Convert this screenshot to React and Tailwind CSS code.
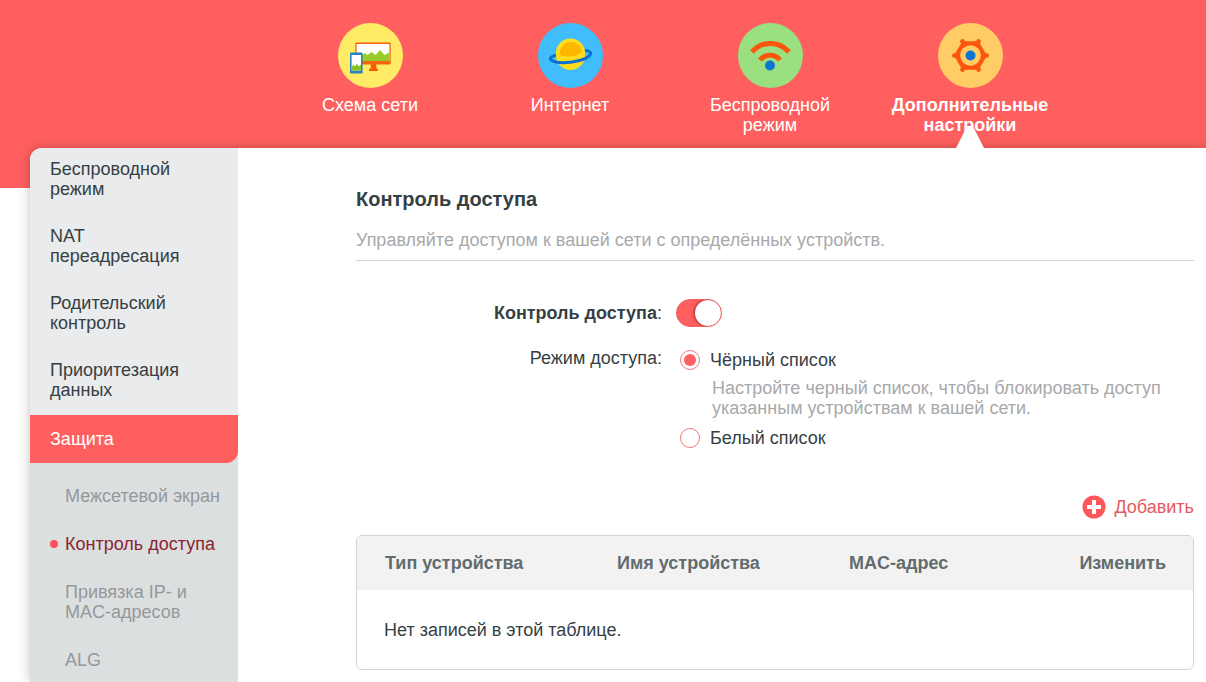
import React, { useState } from 'react';
import clsx from 'clsx';

const NetworkMapIcon = () => (
  <svg viewBox="0 0 65 65" className="h-[65px] w-[65px]" aria-hidden="true">
    <circle cx="32.5" cy="32.5" r="32.5" fill="#ffeb66" />
    <path d="M33 41h5l.6 5H40v2H31v-2h1.4z" fill="#f9590a" />
    <rect x="17.3" y="19.6" width="35.4" height="22" rx="1" fill="#f4640f" />
    <rect x="18.6" y="21" width="32.8" height="17" fill="#fff" />
    <path d="M18.6 38v-4l5-1.6 3-2.4 3 2 4-3 4 3 4.5-5 4.5 5 4.8-2.4V38z" fill="#96cb2a" />
    <rect x="12" y="29.6" width="12.6" height="21" rx="1" fill="#2a84bb" />
    <rect x="13.6" y="32" width="9.4" height="15.5" fill="#fff" />
    <path d="M13.6 47.5V44l1.8-2.5 1.6 2 2-3 1.8 3 2.2-2v6z" fill="#84c225" />
  </svg>
);

const InternetIcon = () => (
  <svg viewBox="0 0 65 65" className="h-[65px] w-[65px]" aria-hidden="true">
    <circle cx="32.5" cy="32.5" r="32.5" fill="#41bdfc" />
    <circle cx="32.5" cy="32.5" r="14.5" fill="#ffdd1c" />
    <path
      d="M18 32c-5 1.5-7 3.5-4.5 5.3C19 40.8 32 40.2 42.5 37.300 50.5 35 54 31 52 29c-1-1-3-1.500-5-1.500"
      fill="none"
      stroke="#0d6fd0"
      strokeWidth="3"
    />
    <path d="M18 31a14.5 14.5 0 0 1 29-2c1 3-1 5-5 6-7 2-16 3-23 2z" fill="#ffdd1c" />
    <path d="M22 32a11 11 0 1 1 22-3.500c-3 5-15 6.500-22 3.500z" fill="#ffb600" />
  </svg>
);

const WirelessIcon = () => (
  <svg viewBox="0 0 65 65" className="h-[65px] w-[65px]" aria-hidden="true">
    <circle cx="32.5" cy="32.5" r="32.5" fill="#9adf80" />
    <g fill="none" stroke="#fb560b" strokeWidth="5">
      <path d="M14 29c10-11.5 27-11.5 37 0" />
      <path d="M22 37c5-6.5 15-6.5 20 0" />
    </g>
    <circle cx="32" cy="42.5" r="5" fill="#0b76d2" />
  </svg>
);

const AdvancedIcon = () => (
  <svg viewBox="0 0 65 65" className="h-[65px] w-[65px]" aria-hidden="true">
    <circle cx="32.5" cy="32.5" r="32.5" fill="#ffcc66" />
    <g fill="#fb560b">
      {[0, 60, 120, 180, 240, 300].map((angle) => (
        <circle key={angle} cx="48.7" cy="32.5" r="2.3" transform={`rotate(${angle} 32.5 32.5)`} />
      ))}
      <path d="M49 32.5 40.700 46.800H24.300L16 32.5l8.300-14.300h16.400z" />
    </g>
    <circle cx="32.5" cy="32.5" r="10.3" fill="#ffcc66" />
    <circle cx="32.5" cy="32.5" r="5" fill="#0b76d2" />
  </svg>
);

const tabs = [
  { label: 'Схема сети', Icon: NetworkMapIcon },
  { label: 'Интернет', Icon: InternetIcon },
  { label: 'Беспроводной режим', Icon: WirelessIcon },
  { label: 'Дополнительные настройки', Icon: AdvancedIcon, active: true },
];

const menu = ['Беспроводной режим', 'NAT переадресация', 'Родительский контроль', 'Приоритезация данных'];

const submenu = [
  { label: 'Межсетевой экран' },
  { label: 'Контроль доступа', active: true },
  { label: 'Привязка IP- и MAC-адресов' },
  { label: 'ALG' },
];

const columns = ['Тип устройства', 'Имя устройства', 'MAC-адрес', 'Изменить'];

const TopNav = () => (
  <nav className="flex justify-center pt-[23px] pl-[134px]">
    {tabs.map(({ label, Icon, active }) => (
      <a
        key={label}
        href="#"
        className={clsx('relative flex h-[125px] w-[200px] flex-col items-center px-6 text-center text-white', active && 'font-bold')}
      >
        <Icon />
        <span className="mt-[7px]">{label}</span>
        {active && (
          <span className="absolute bottom-0 left-1/2 z-10 h-[22px] w-7 -translate-x-1/2 bg-white [clip-path:polygon(40%_0,60%_0,100%_100%,0_100%)]" />
        )}
      </a>
    ))}
  </nav>
);

const Sidebar = () => (
  <aside className="flex w-[208px] shrink-0 flex-col rounded-tl-xl bg-[#e9ebec]">
    <ul className="flex flex-col gap-[27px] px-5 pt-[11px] pb-[15px]">
      {menu.map((item) => (
        <li key={item}>
          <a href="#" className="block w-[140px]">{item}</a>
        </li>
      ))}
    </ul>
    <div className="flex-1 bg-[#dcdfe0]">
      <a href="#" className="flex h-12 items-center rounded-br-xl bg-[#ff605f] px-5 text-white">Защита</a>
      <ul className="flex flex-col gap-7 pt-[23px] pr-4 pl-5">
        {submenu.map(({ label, active }) => (
          <li key={label} className="flex">
            <span className="flex h-5 w-[15px] shrink-0 items-center">
              {active && <span className="h-2 w-2 rounded-full bg-[#ff4f54]" />}
            </span>
            <a href="#" className={active ? 'text-[#8a2530]' : 'text-[#93999b]'}>{label}</a>
          </li>
        ))}
      </ul>
    </div>
  </aside>
);

const Radio = ({ value, label, checked, onChange }) => (
  <label className="flex items-center gap-[10px]">
    <input
      type="radio"
      name="mode"
      value={value}
      checked={checked}
      onChange={onChange}
      className="h-5 w-5 appearance-none rounded-full border border-[#f4767a] bg-white p-[3px] before:block before:h-3 before:w-3 before:rounded-full checked:before:bg-[#ff605f]"
    />
    {label}
  </label>
);

const AccessForm = () => {
  const [enabled, setEnabled] = useState(true);
  const [mode, setMode] = useState('black');

  return (
    <form className="pt-[38px]">
      <div className="flex items-center gap-[14px]">
        <label htmlFor="access" className="w-[306px] text-right">
          <b>Контроль доступа</b>:
        </label>
        <input
          id="access"
          type="checkbox"
          checked={enabled}
          onChange={(e) => setEnabled(e.target.checked)}
          className="flex h-7 w-[46px] appearance-none overflow-hidden rounded-full border border-[#f0605f] bg-gray-300 before:h-[26px] before:w-[26px] before:rounded-full before:bg-white before:shadow-[-1px_0_3px_rgba(90,0,0,0.6)] checked:justify-end checked:bg-[#ff605f]"
        />
      </div>

      <div className="mt-[21px] flex gap-[18px]" role="radiogroup" aria-labelledby="mode-label">
        <span id="mode-label" className="w-[306px] shrink-0 text-right">Режим доступа:</span>
        <div className="pt-[2px]">
          <Radio value="black" label="Чёрный список" checked={mode === 'black'} onChange={() => setMode('black')} />
          <p className="mt-2 mb-[10px] ml-8 max-w-[450px] text-[#a8a9aa]">
            Настройте черный список, чтобы блокировать доступ указанным устройствам к вашей сети.
          </p>
          <Radio value="white" label="Белый список" checked={mode === 'white'} onChange={() => setMode('white')} />
        </div>
      </div>
    </form>
  );
};

const DeviceTable = () => (
  <div className="mt-4 mb-3 overflow-hidden rounded-md border border-[#d0d4d5]">
    <table className="w-full text-left">
      <thead className="bg-[#f2f2f2] text-[#626b6e]">
        <tr className="h-[54px]">
          {columns.map((name) => (
            <th key={name} className="w-[232px] pl-7 font-bold last:w-auto last:pr-[27px] last:pl-0 last:text-right">{name}</th>
          ))}
        </tr>
      </thead>
      <tbody>
        <tr className="h-[79px]">
          <td colSpan={4} className="pl-[27px]">Нет записей в этой таблице.</td>
        </tr>
      </tbody>
    </table>
  </div>
);

export default function App() {
  return (
    <div className="h-screen overflow-hidden bg-white bg-linear-to-b from-[#ff605f] to-[#ff605f] bg-[length:100%_188px] bg-no-repeat font-['Liberation_Sans',Arial,sans-serif] text-[18px] leading-5 text-[#363f44]">
      <div className="flex min-h-full flex-col">
        <TopNav />
        <div className="ml-[30px] flex flex-1 rounded-tl-xl bg-white shadow-[0_0_12px_rgba(0,0,0,0.25)]">
          <Sidebar />
          <main className="flex-1 pt-[39px] pr-3 pl-[118px]">
            <h1 className="text-[20px] leading-6 font-bold">Контроль доступа</h1>
            <p className="mt-[19px] border-b border-[#d0d2d3] pb-[10px] text-[#a8a9aa]">
              Управляйте доступом к вашей сети с определённых устройств.
            </p>
            <AccessForm />
            <button type="button" className="mt-[47px] ml-auto flex items-center gap-2 text-[#e8595d]">
              <svg viewBox="0 0 24 24" className="h-6 w-6" aria-hidden="true">
                <circle cx="12" cy="12" r="11.5" fill="#ff5659" />
                <path d="M12 5v14M5 12h14" stroke="#fff" strokeWidth="4" />
              </svg>
              Добавить
            </button>
            <DeviceTable />
          </main>
        </div>
      </div>
    </div>
  );
}
